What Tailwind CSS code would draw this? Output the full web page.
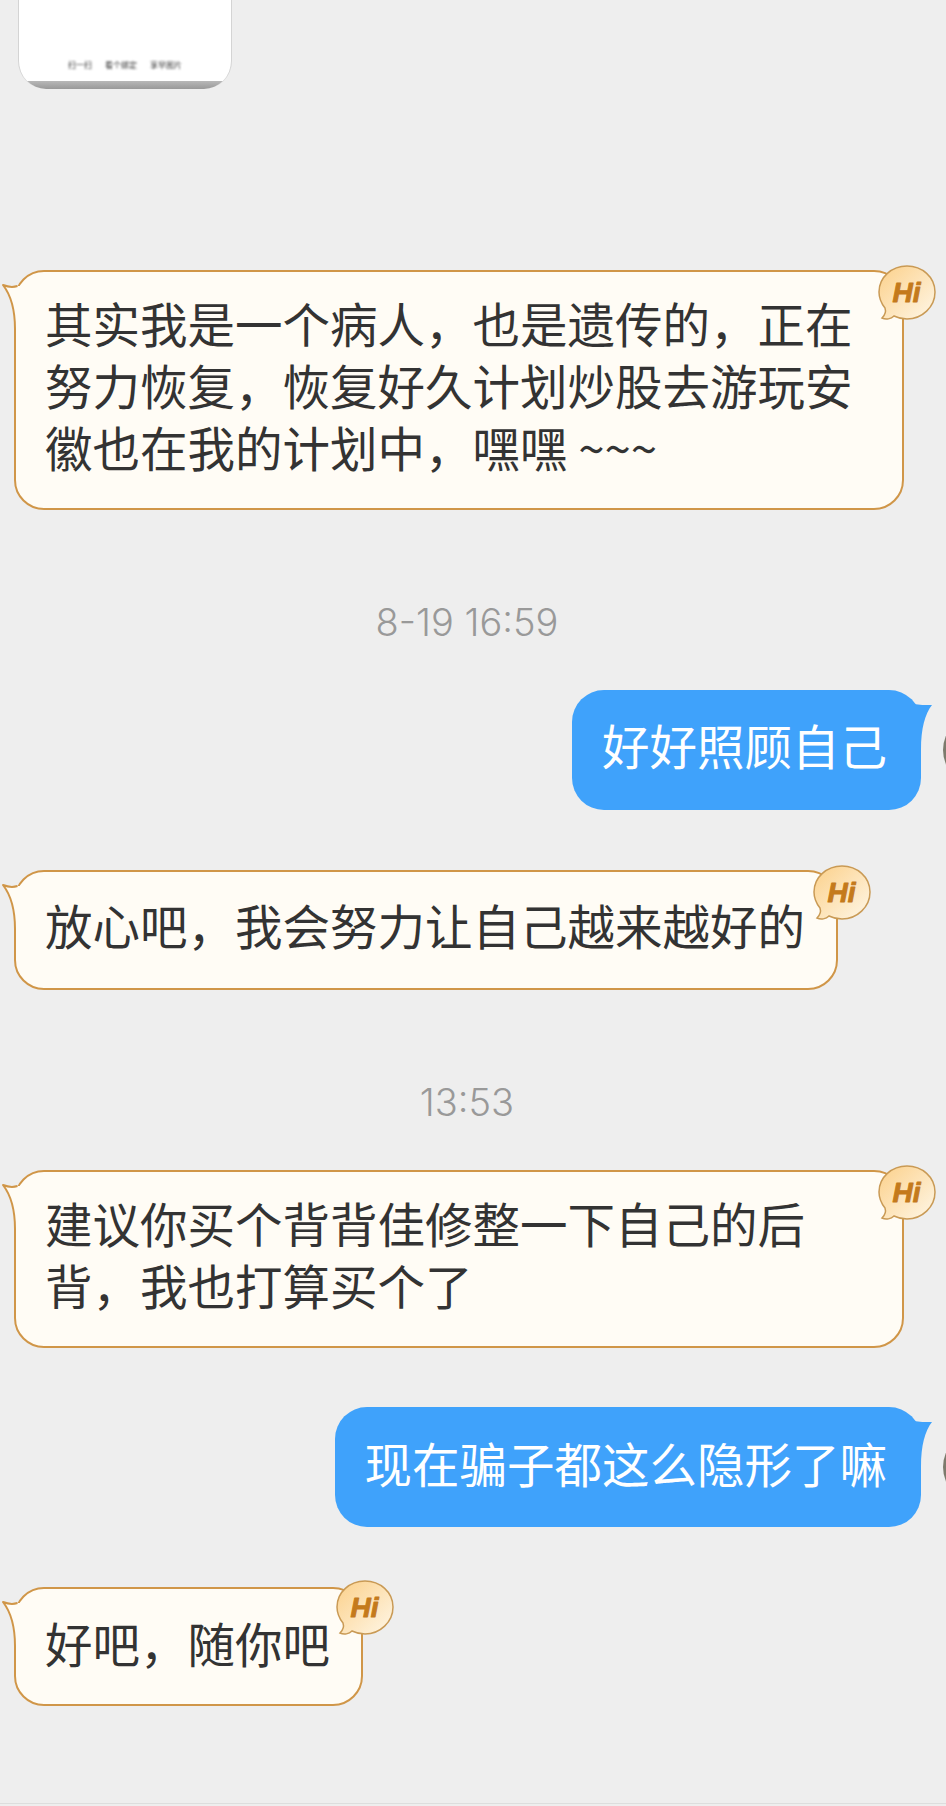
<!DOCTYPE html>
<html lang="zh-CN">
  <head>
    <meta charset="UTF-8" />
    <meta name="viewport" content="width=device-width, initial-scale=1.0" />
    <title>聊天记录</title>
    <script src="https://cdn.jsdelivr.net/npm/@tailwindcss/browser@4"></script>
  </head>
  <body>
    <svg class="absolute w-0 h-0">
      <defs>
        <linearGradient id="hi-bg" x1="0.1" y1="0.1" x2="0.9" y2="0.9">
          <stop offset="0" stop-color="#fcd493" />
          <stop offset="1" stop-color="#fef3de" />
        </linearGradient>
      </defs>
    </svg>

    <div class="relative w-[946px] h-[1806px] overflow-hidden bg-[#eeeeee] px-[14px] [font-family:'Noto_Sans_CJK_SC','Liberation_Sans',sans-serif] text-[47.5px] leading-[62px] text-[#333333]">
      <!-- shared card from the previous message -->
      <div class="ml-[4px] w-[214px] h-[89px] overflow-hidden rounded-b-[28px] border-x border-[#d4d4d4] bg-white">
        <div class="flex h-[81px] items-end justify-center gap-[13px] pb-[10px] text-[8px] leading-[12px] text-[#333333] blur-[0.8px]">
          <span>扫一扫</span>
          <span>看个绑定</span>
          <span>享早图片</span>
        </div>
        <div class="h-[8px] bg-gradient-to-b from-[#b8b8b8] to-[#999999]"></div>
      </div>

      <!-- incoming -->
      <div class="relative mt-[181px] w-[890px] h-[240px] rounded-[30px] border-2 border-[#d09648] bg-[#fffcf5] pl-[29px] pr-[31px] pt-[20px]">
        <svg class="absolute left-[-16px] top-[7px]" width="40" height="60" viewBox="0 0 40 60">
          <path d="M3 6 C8 8 13 8.500 17.500 7 L30 7 L30 50 L15 50 C15 30 10 15 3 6 Z" fill="#fffcf5" />
          <path d="M17.500 7 C13 8.500 8 8 3 6 C10 15 15 30 15 50" fill="none" stroke="#d09648" stroke-width="2" stroke-linejoin="round" />
        </svg>
        <svg class="absolute right-[-34px] top-[-7px]" width="58" height="56" viewBox="0 0 58 56">
          <path d="M29 1 C44 1 57 12 57 27 C57 42 44 54 29 54 C24 54 20 53 16 51 C13 54 8 55 4 53 C7 50 8 46 7 43 C3 38 1 33 1 27 C1 12 14 1 29 1 Z" fill="url(#hi-bg)" stroke="#c99a55" stroke-width="1.500" />
          <text x="28.500" y="37" text-anchor="middle" font-family="Liberation Sans" font-size="28" font-weight="700" font-style="italic" fill="#c47a1c" stroke="#c47a1c" stroke-width="1" stroke-linejoin="round">Hi</text>
        </svg>
        <span class="relative">其实我是一个病人，也是遗传的，正在努力恢复，恢复好久计划炒股去游玩安徽也在我的计划中，嘿嘿 ~~~</span>
      </div>

      <div class="mt-[90px] mb-[46px] h-[44px] pr-[12px] text-center text-[38px] leading-[44px] text-[#999999] [font-family:Inter,sans-serif] font-light">8-19 16:59</div>

      <!-- outgoing -->
      <div class="relative ml-auto mr-[11px] w-fit h-[120px] rounded-[32px] bg-[#3fa2fb] pl-[30px] pr-[34px] pt-[24px] text-white">
        <svg class="absolute right-[-11px] top-[6px]" width="40" height="60" viewBox="0 0 40 60">
          <path d="M22 8 C27 9 33 9 40 9 C33 18 29 32 29 54 L0 54 L0 8 Z" fill="#3fa2fb" />
        </svg>
        <span class="relative">好好照顾自己</span>
        <div class="absolute left-[371px] top-[25px] h-[70px] w-[70px] rounded-full bg-[#7d7a6c]"></div>
      </div>

      <!-- incoming -->
      <div class="relative mt-[60px] w-fit h-[120px] rounded-[30px] border-2 border-[#d09648] bg-[#fffcf5] pl-[29px] pr-[31px] pt-[22px]">
        <svg class="absolute left-[-16px] top-[7px]" width="40" height="60" viewBox="0 0 40 60">
          <path d="M3 6 C8 8 13 8.500 17.500 7 L30 7 L30 50 L15 50 C15 30 10 15 3 6 Z" fill="#fffcf5" />
          <path d="M17.500 7 C13 8.500 8 8 3 6 C10 15 15 30 15 50" fill="none" stroke="#d09648" stroke-width="2" stroke-linejoin="round" />
        </svg>
        <svg class="absolute right-[-35px] top-[-7px]" width="58" height="56" viewBox="0 0 58 56">
          <path d="M29 1 C44 1 57 12 57 27 C57 42 44 54 29 54 C24 54 20 53 16 51 C13 54 8 55 4 53 C7 50 8 46 7 43 C3 38 1 33 1 27 C1 12 14 1 29 1 Z" fill="url(#hi-bg)" stroke="#c99a55" stroke-width="1.500" />
          <text x="28.500" y="37" text-anchor="middle" font-family="Liberation Sans" font-size="28" font-weight="700" font-style="italic" fill="#c47a1c" stroke="#c47a1c" stroke-width="1" stroke-linejoin="round">Hi</text>
        </svg>
        <span class="relative">放心吧，我会努力让自己越来越好的</span>
      </div>

      <div class="mt-[90px] mb-[46px] h-[44px] pr-[12px] text-center text-[38px] leading-[44px] text-[#999999] [font-family:Inter,sans-serif] font-light">13:53</div>

      <!-- incoming -->
      <div class="relative w-[890px] h-[178px] rounded-[30px] border-2 border-[#d09648] bg-[#fffcf5] pl-[29px] pr-[31px] pt-[20px]">
        <svg class="absolute left-[-16px] top-[7px]" width="40" height="60" viewBox="0 0 40 60">
          <path d="M3 6 C8 8 13 8.500 17.500 7 L30 7 L30 50 L15 50 C15 30 10 15 3 6 Z" fill="#fffcf5" />
          <path d="M17.500 7 C13 8.500 8 8 3 6 C10 15 15 30 15 50" fill="none" stroke="#d09648" stroke-width="2" stroke-linejoin="round" />
        </svg>
        <svg class="absolute right-[-34px] top-[-7px]" width="58" height="56" viewBox="0 0 58 56">
          <path d="M29 1 C44 1 57 12 57 27 C57 42 44 54 29 54 C24 54 20 53 16 51 C13 54 8 55 4 53 C7 50 8 46 7 43 C3 38 1 33 1 27 C1 12 14 1 29 1 Z" fill="url(#hi-bg)" stroke="#c99a55" stroke-width="1.500" />
          <text x="28.500" y="37" text-anchor="middle" font-family="Liberation Sans" font-size="28" font-weight="700" font-style="italic" fill="#c47a1c" stroke="#c47a1c" stroke-width="1" stroke-linejoin="round">Hi</text>
        </svg>
        <span class="relative">建议你买个背背佳修整一下自己的后背，我也打算买个了</span>
      </div>

      <!-- outgoing -->
      <div class="relative mt-[59px] ml-auto mr-[11px] w-fit h-[120px] rounded-[32px] bg-[#3fa2fb] pl-[30px] pr-[34px] pt-[25px] text-white">
        <svg class="absolute right-[-11px] top-[6px]" width="40" height="60" viewBox="0 0 40 60">
          <path d="M22 8 C27 9 33 9 40 9 C33 18 29 32 29 54 L0 54 L0 8 Z" fill="#3fa2fb" />
        </svg>
        <span class="relative">现在骗子都这么隐形了嘛</span>
        <div class="absolute left-[608px] top-[25px] h-[70px] w-[70px] rounded-full bg-[#7d7a6c]"></div>
      </div>

      <!-- incoming -->
      <div class="relative mt-[60px] w-[349px] h-[119px] rounded-[30px] border-2 border-[#d09648] bg-[#fffcf5] pl-[29px] pt-[23px] whitespace-nowrap">
        <svg class="absolute left-[-16px] top-[7px]" width="40" height="60" viewBox="0 0 40 60">
          <path d="M3 6 C8 8 13 8.500 17.500 7 L30 7 L30 50 L15 50 C15 30 10 15 3 6 Z" fill="#fffcf5" />
          <path d="M17.500 7 C13 8.500 8 8 3 6 C10 15 15 30 15 50" fill="none" stroke="#d09648" stroke-width="2" stroke-linejoin="round" />
        </svg>
        <svg class="absolute right-[-33px] top-[-9px]" width="58" height="56" viewBox="0 0 58 56">
          <path d="M29 1 C44 1 57 12 57 27 C57 42 44 54 29 54 C24 54 20 53 16 51 C13 54 8 55 4 53 C7 50 8 46 7 43 C3 38 1 33 1 27 C1 12 14 1 29 1 Z" fill="url(#hi-bg)" stroke="#c99a55" stroke-width="1.500" />
          <text x="28.500" y="37" text-anchor="middle" font-family="Liberation Sans" font-size="28" font-weight="700" font-style="italic" fill="#c47a1c" stroke="#c47a1c" stroke-width="1" stroke-linejoin="round">Hi</text>
        </svg>
        <span class="relative">好吧，随你吧</span>
      </div>

      <div class="absolute bottom-0 left-0 h-[3px] w-full border-t border-[#dddddd]"></div>
    </div>
  </body>
</html>
